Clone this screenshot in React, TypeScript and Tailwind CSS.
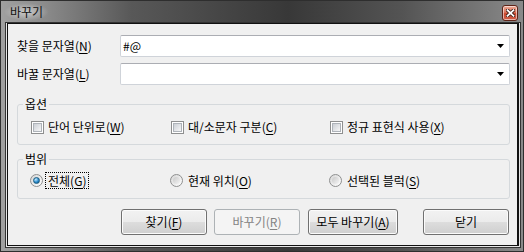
import React from "react";

function Mn({ children }: { children: React.ReactNode }) {
  return <span className="underline decoration-1 underline-offset-[2px]">{children}</span>;
}

function Combo({ value }: { value?: string }) {
  return (
    <div className="flex h-[22px] flex-1 items-center rounded-[2px] border border-[#cfd3d9] border-t-[#abadb3] bg-white pl-[2px] pr-[5px]">
      <span className="flex-1 text-[12px] leading-none text-black">{value}</span>
      <svg width="7" height="4" viewBox="0 0 7 4">
        <path d="M0 0h7L3.5 4z" fill="#000" />
      </svg>
    </div>
  );
}

function Check({ children }: { children: React.ReactNode }) {
  return (
    <label className="flex h-[16px] items-center gap-[4px]">
      <span className="flex h-[13px] w-[13px] border border-[#8e8f8f] bg-white p-[1px]">
        <span className="flex-1 border border-[#aeb3b9] bg-[linear-gradient(135deg,#cbcfd5,#f7f7f7)]" />
      </span>
      <span className="leading-[16px]">{children}</span>
    </label>
  );
}

function Radio({ children, on }: { children: React.ReactNode; on?: boolean }) {
  return (
    <label className="-ml-[1px] flex h-[16px] items-center gap-[3px]">
      <span className="flex h-[13px] w-[13px] items-center justify-center rounded-full border border-[#8e8f8f] bg-[linear-gradient(135deg,#d6d6d6,#ffffff)]">
        {on ? (
          <span className="h-[7px] w-[7px] rounded-full border border-[#1b5c80] bg-[radial-gradient(circle_at_35%_30%,#c6ebff,#2a8ccd_55%,#0d4f7d)]" />
        ) : (
          <span className="h-[7px] w-[7px] rounded-full bg-[linear-gradient(135deg,#c9c9c9,#f4f4f4)]" />
        )}
      </span>
      <span
        className={
          on
            ? "px-[2px] leading-[15px] outline-1 outline-dotted outline-black"
            : "px-[2px] leading-[15px]"
        }
      >
        {children}
      </span>
    </label>
  );
}

function Btn({ children, w, disabled }: { children: React.ReactNode; w: string; disabled?: boolean }) {
  const base = "flex h-[26px] items-center justify-center rounded-[3px] border text-[12px] " + w;
  return disabled ? (
    <button className={base + " border-[#adb2b5] bg-[#f4f4f4] text-[#838383]"}>{children}</button>
  ) : (
    <button
      className={
        base +
        " border-[#707070] bg-[linear-gradient(#f2f2f2_0%,#ebebeb_50%,#dddddd_50%,#cfcfcf_100%)] text-black shadow-[inset_0_0_0_1px_#fbfbfb]"
      }
    >
      {children}
    </button>
  );
}

export default function App() {
  return (
    <div className="flex h-[252px] w-[524px] flex-col border border-[#2e2e2e] bg-[linear-gradient(to_right,#a0a0a0_0%,#8c8c8c_8%,#585858_25%,#383838_55%,#545454_77%,#8a8a8a_100%)] font-['Noto_Sans_CJK_KR',sans-serif] text-[12px] text-black">
      {/* title bar */}
      <div className="flex h-[21px] shrink-0 items-start justify-between pl-[3px] pr-[5px]">
        <span className="mt-[2px] rounded-full bg-[radial-gradient(ellipse_at_center,rgba(255,255,255,0.5),rgba(255,255,255,0)_70%)] px-[6px] leading-[18px] text-[#111]">
          바꾸기
        </span>
        <button className="mt-[4px] flex h-[16px] w-[16px] items-center justify-center rounded-[3px] border border-[#5e2418] bg-[linear-gradient(#eeaa96_0%,#dc735a_45%,#c9462b_55%,#d0604a_100%)] shadow-[inset_0_0_0_1px_rgba(255,255,255,0.55)]">
          <svg width="9" height="8" viewBox="0 0 9 8">
            <path d="M1.5 1.2L7.5 6.8M7.5 1.2L1.5 6.8" stroke="#3a1a12" strokeWidth="3.4" strokeLinecap="square" />
            <path d="M1.5 1.2L7.5 6.8M7.5 1.2L1.5 6.8" stroke="#fff" strokeWidth="1.8" strokeLinecap="square" />
          </svg>
        </button>
      </div>

      {/* client frame */}
      <div className="mb-[4px] ml-[4px] mr-[2px] flex flex-1 flex-col border border-[#333]">
        <div className="flex flex-1 flex-col border border-t-0 border-[#e6e6e6]">
          <div className="flex flex-1 flex-col border border-r-2 border-[#111] bg-[#f0f0f0] pb-[10px] pl-[9px] pr-[7px] pt-[11px]">
            <div className="flex h-[22px] items-center">
              <div className="w-[103px]">
                찾을 문자열(<Mn>N</Mn>)
              </div>
              <Combo value="#@" />
            </div>
            <div className="mt-[6px] flex h-[22px] items-center">
              <div className="w-[103px]">
                바꿀 문자열(<Mn>L</Mn>)
              </div>
              <Combo />
            </div>

            <fieldset className="mt-[11px] rounded-[3px] border border-[#d5d9dc]">
              <legend className="ml-[5px] px-[2px] leading-[16px]">옵션</legend>
              <div className="grid grid-cols-[140px_159px_1fr] pb-[9px] pl-[13px] pt-[7px]">
                <Check>
                  단어 단위로(<Mn>W</Mn>)
                </Check>
                <Check>
                  대/소문자 구분(<Mn>C</Mn>)
                </Check>
                <Check>
                  정규 표현식 사용(<Mn>X</Mn>)
                </Check>
              </div>
            </fieldset>

            <fieldset className="mt-[6px] rounded-[3px] border border-[#d5d9dc]">
              <legend className="ml-[5px] px-[2px] leading-[16px]">범위</legend>
              <div className="grid grid-cols-[140px_159px_1fr] pb-[10px] pl-[13px] pt-[5px]">
                <Radio on>
                  전체(<Mn>G</Mn>)
                </Radio>
                <Radio>
                  현재 위치(<Mn>O</Mn>)
                </Radio>
                <Radio>
                  선택된 블럭(<Mn>S</Mn>)
                </Radio>
              </div>
            </fieldset>

            <div className="mt-[10px] flex">
              <div className="ml-[104px]">
                <Btn w="w-[86px]">
                  찾기(<Mn>F</Mn>)
                </Btn>
              </div>
              <div className="ml-[7px]">
                <Btn w="w-[86px]" disabled>
                  바꾸기(<Mn>R</Mn>)
                </Btn>
              </div>
              <div className="ml-[8px]">
                <Btn w="w-[90px]">
                  모두 바꾸기(<Mn>A</Mn>)
                </Btn>
              </div>
              <div className="ml-[25px]">
                <Btn w="w-[86px]">닫기</Btn>
              </div>
            </div>
          </div>
        </div>
      </div>
    </div>
  );
}
